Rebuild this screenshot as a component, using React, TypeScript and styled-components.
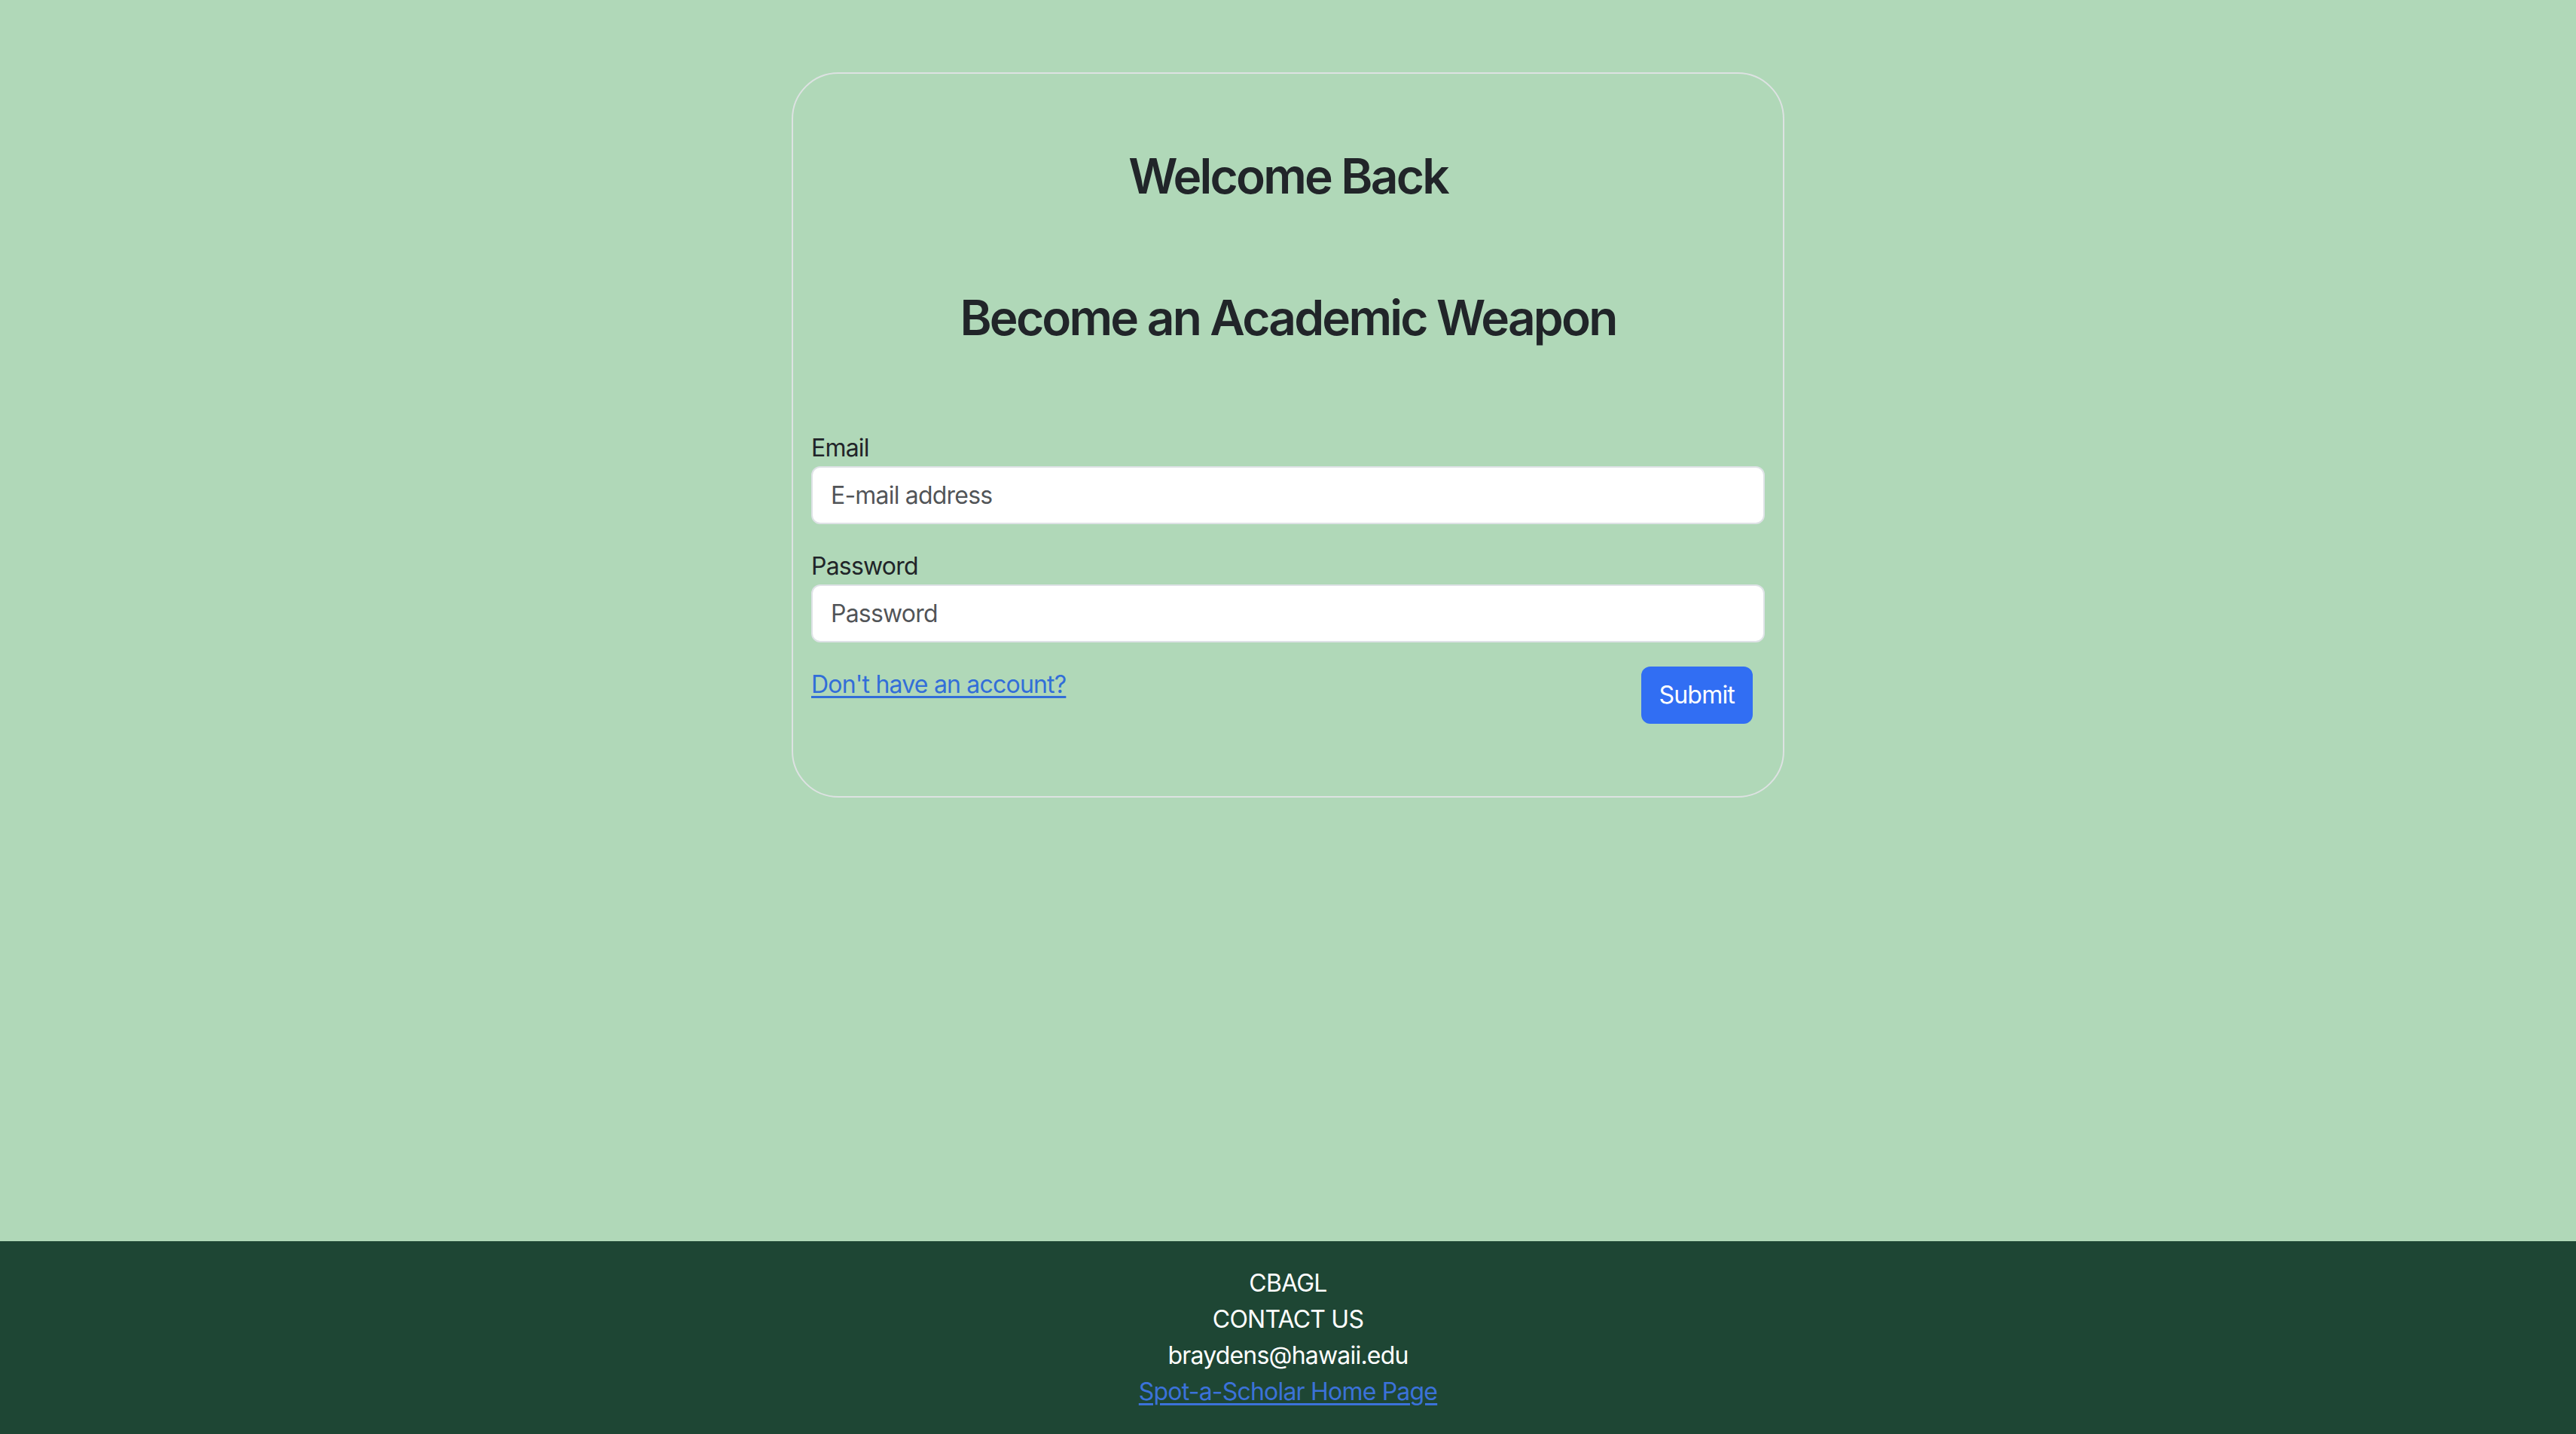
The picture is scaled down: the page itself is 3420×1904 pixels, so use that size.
import * as React from "react";
import styled, { createGlobalStyle } from "styled-components";

const GlobalStyle = createGlobalStyle`
  html, body {
    margin: 0;
    padding: 0;
  }
  body {
    font-family: Inter, "Liberation Sans", Arial, sans-serif;
    color: #212529;
    background: #b0d8b8;
  }
  * {
    box-sizing: border-box;
  }
`;

const Page = styled.div`
  min-height: 100vh;
  display: flex;
  flex-direction: column;
  background: #b0d8b8;
`;

const Main = styled.main`
  flex: 1;
  display: flex;
  justify-content: center;
  align-items: flex-start;
  padding-top: 96px;
`;

const Card = styled.section`
  width: 1318px;
  border: 2px solid #dde2e2;
  border-radius: 62px;
  padding: 0 24px 96px;
  display: flex;
  flex-direction: column;
`;

const Heading = styled.h2<{ $gap: number }>`
  margin: ${(p) => p.$gap}px 0 0;
  font-size: 64px;
  line-height: 77px;
  font-weight: 600;
  letter-spacing: -2.8px;
  text-align: center;
  color: #212529;
`;

const Form = styled.form`
  margin-top: 111px;
  display: flex;
  flex-direction: column;
`;

const Field = styled.div`
  display: flex;
  flex-direction: column;
  margin-bottom: 32px;
`;

const Label = styled.label`
  font-size: 32px;
  line-height: 48px;
  letter-spacing: -0.8px;
`;

const Input = styled.input`
  height: 77px;
  width: 100%;
  border: 2px solid #dee2e6;
  border-radius: 12px;
  background: #fff;
  padding: 12px 24px;
  font-family: inherit;
  font-size: 32px;
  line-height: 48px;
  letter-spacing: -0.8px;
  color: #212529;
  outline: none;
  &::placeholder {
    color: rgba(33, 37, 41, 0.78);
  }
`;

const ActionRow = styled.div`
  display: flex;
  justify-content: space-between;
  align-items: flex-start;
`;

const TextLink = styled.a`
  font-size: 32px;
  line-height: 48px;
  letter-spacing: -0.8px;
  color: #326ed8;
  text-decoration: underline;
  text-underline-offset: 4px;
`;

const SubmitButton = styled.button`
  margin-right: 16px;
  height: 76px;
  padding: 12px 24px;
  border: none;
  border-radius: 12px;
  background: #316ef3;
  color: #fff;
  font-family: inherit;
  font-size: 32px;
  line-height: 48px;
  letter-spacing: -0.8px;
`;

const Footer = styled.footer`
  background: #1e4634;
  color: #fff;
  padding: 32px 0;
  display: flex;
  flex-direction: column;
  align-items: center;
  font-size: 32px;
  line-height: 48px;
  letter-spacing: -0.8px;
`;

const FooterLine = styled.div``;

const FooterLink = styled.a`
  color: #3b72d9;
  text-decoration: underline;
  text-underline-offset: 4px;
`;

const App: React.FC = () => {
  return (
    <Page>
      <GlobalStyle />
      <Main>
        <Card>
          <Heading $gap={97}>Welcome Back</Heading>
          <Heading $gap={111}>Become an Academic Weapon</Heading>
          <Form onSubmit={(e) => e.preventDefault()}>
            <Field>
              <Label htmlFor="email">Email</Label>
              <Input id="email" type="email" placeholder="E-mail address" />
            </Field>
            <Field>
              <Label htmlFor="password">Password</Label>
              <Input id="password" type="password" placeholder="Password" />
            </Field>
            <ActionRow>
              <TextLink href="#signup">Don't have an account?</TextLink>
              <SubmitButton type="submit">Submit</SubmitButton>
            </ActionRow>
          </Form>
        </Card>
      </Main>
      <Footer>
        <FooterLine>CBAGL</FooterLine>
        <FooterLine>CONTACT US</FooterLine>
        <FooterLine>braydens@hawaii.edu</FooterLine>
        <FooterLine>
          <FooterLink href="#home">Spot-a-Scholar Home Page</FooterLink>
        </FooterLine>
      </Footer>
    </Page>
  );
};

export default App;
